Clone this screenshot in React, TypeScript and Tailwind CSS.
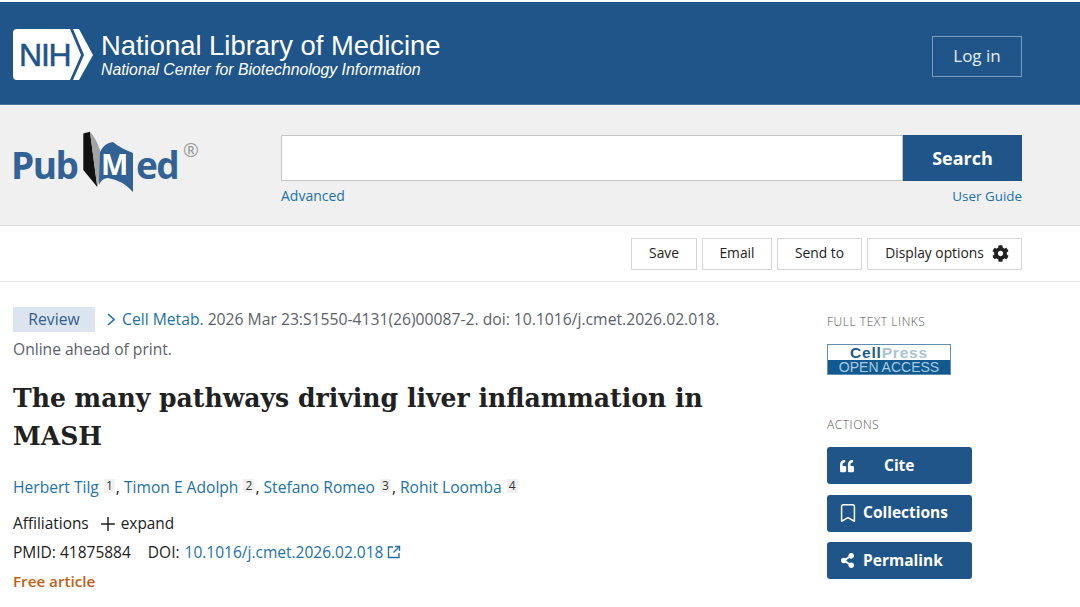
import { Bookmark, Plus } from "lucide-react";
import { FaCog, FaQuoteLeft, FaShareAlt } from "react-icons/fa";

const sans = "font-['Open_Sans','Noto_Sans',sans-serif]";

function NihLogo() {
  return (
    <div className="relative mt-[3px] h-[51px] w-[80px] shrink-0">
      <svg width="80" height="51" viewBox="0 0 80 51" className="absolute inset-0">
        <path d="M4 0H57L68 26L57 51H4Q0 51 0 47V4Q0 0 4 0Z" fill="#fff" />
        <path d="M60 0H66L80 26L66 51H60L71 26Z" fill="#fff" />
      </svg>
      <span className="absolute left-[6px] top-[7px] font-['Liberation_Sans',sans-serif] text-[32px] leading-[38px] tracking-[-1.2px] text-[#20558a] [-webkit-text-stroke:0.5px_#20558a]">
        NIH
      </span>
    </div>
  );
}

function PubMedLogo() {
  return (
    <div className="relative h-[66px] w-[190px] font-['Open_Sans',sans-serif] font-bold text-[#326295]">
      <span className="absolute -left-[2px] top-[12px] text-[37px] leading-[46px] tracking-[-1.5px]">Pub</span>
      <svg width="54" height="66" viewBox="82 130 54 66" className="absolute left-[69px] top-0">
        <path d="M83.3 133.5L90 131.7L95 170L97.3 187L83.3 170Z" fill="#111" />
        <path d="M90 131.7Q96 138 100 150V178L97.3 187L95 170Z" fill="#a3a3a3" />
        <path d="M100 152Q104 143 113 142Q120 148 133 153V192Q122 180 108 178Q102 178 99 185Z" fill="#326295" />
      </svg>
      <span className="absolute left-[88px] top-[14px] text-[29px] leading-[40px] text-white">M</span>
      <span className="absolute left-[123px] top-[12px] text-[37px] leading-[46px] tracking-[-1.5px]">ed</span>
      <span className="absolute left-[170px] top-[8px] font-normal text-[19px] leading-[24px] text-[#999]">®</span>
    </div>
  );
}

function CellPressBadge() {
  return (
    <div className="flex h-[31px] w-[124px] flex-col border border-[#5f8fb0] bg-white font-['Liberation_Sans',sans-serif]">
      <div className="h-[15px] text-center text-[15.5px] font-bold leading-[15px] tracking-[0.8px]">
        <span className="text-[#1d5a8c]">Cell</span>
        <span className="text-[#a9c2d6]">Press</span>
      </div>
      <div className="flex-1 bg-[#11598f] text-center text-[14px] leading-[14px] text-[#a8cbe3]">OPEN ACCESS</div>
    </div>
  );
}

function ActionButton({ icon, label, gap }: { icon: React.ReactNode; label: string; gap: string }) {
  return (
    <button type="button" className={`flex h-[37px] w-[145px] items-center rounded-[3px] bg-[#20558a] pl-[13px] text-[15.5px] font-bold text-white ${gap}`}>
      {icon}
      {label}
    </button>
  );
}

function BarButton({ label, width, children }: { label: string; width: string; children?: React.ReactNode }) {
  return (
    <button type="button" className={`flex h-[32px] items-center justify-center gap-[8px] border border-[#d6d6d6] bg-white text-[13.8px] text-[#212121] ${width}`}>
      {label}
      {children}
    </button>
  );
}

function Sup({ n }: { n: number }) {
  return (
    <sup className="relative -top-[3px] ml-[5px] mr-[1px] inline-block w-[11px] bg-[#f1f1f1] text-center align-baseline text-[12px] leading-[14px] text-[#333]">
      {n}
    </sup>
  );
}

export default function App() {
  return (
    <div className={`min-h-[607px] w-[1080px] overflow-hidden bg-white ${sans}`}>
      <header className="mt-[2px] flex h-[103px] items-center justify-between border-b border-[#4a76a3] bg-[#20558a] pl-[13px] pr-[58px]">
        <div className="flex items-center gap-[8px]">
          <NihLogo />
          <div className="mt-[4px] font-['Liberation_Sans',sans-serif] text-white">
            <div className="text-[27.4px] leading-[30px]">National Library of Medicine</div>
            <div className="text-[15.8px] italic leading-[18px]">National Center for Biotechnology Information</div>
          </div>
        </div>
        <button type="button" className="mt-[6px] h-[41px] w-[90px] border border-[#7b9cbd] text-[17px] text-[#e6edf4]">
          Log in
        </button>
      </header>

      <section className="flex h-[121px] border-b border-[#dedede] bg-[#f0f0f0] pl-[13px] pr-[58px] pt-[25px]">
        <div className="w-[268px] shrink-0">
          <PubMedLogo />
        </div>
        <div className="flex-1 pt-[5px]">
          <div className="flex h-[46px]">
            <div className="flex-1 border border-[#c4c4c4] bg-white" />
            <button type="button" className="w-[119px] bg-[#20558a] text-[18px] font-bold text-white">
              Search
            </button>
          </div>
          <div className="mt-[5px] flex justify-between leading-[20px] text-[#2072a8]">
            <span className="text-[14px]">Advanced</span>
            <span className="text-[13.4px]">User Guide</span>
          </div>
        </div>
      </section>

      <nav className="flex h-[56px] items-center justify-end gap-[5px] border-b border-[#ececec] pr-[58px]">
        <BarButton label="Save" width="w-[66px]" />
        <BarButton label="Email" width="w-[70px]" />
        <BarButton label="Send to" width="w-[85px]" />
        <BarButton label="Display options" width="w-[155px] pl-[5px]">
          <FaCog className="text-[17px] text-[#212121]" />
        </BarButton>
      </nav>

      <main className="flex pl-[13px] pt-[25px]">
        <article className="w-[740px] shrink-0">
          <div className="flex h-[25px] items-center whitespace-nowrap text-[15.7px] text-[#5b616b]">
            <span className="flex h-[25px] w-[82px] items-center justify-center bg-[#dce4ef] text-[#2f5f8f]">Review</span>
            <svg width="8" height="13" viewBox="0 0 8 13" fill="none" stroke="#2072a8" strokeWidth="1.6" className="ml-[12px]">
              <path d="M1 1L7 6.5L1 12" />
            </svg>
            <span className="ml-[7px] text-[#2072a8]">Cell Metab.</span>
            <span className="ml-[4px]">2026 Mar 23:S1550-4131(26)00087-2. doi: 10.1016/j.cmet.2026.02.018.</span>
          </div>
          <div className="mt-[5px] text-[15.6px] leading-[25px] text-[#5b616b]">Online ahead of print.</div>
          <h1 className="mt-[17px] w-[720px] font-['DejaVu_Serif',serif] text-[25.1px] font-bold leading-[38px] text-[#212121]">
            The many pathways driving liver inflammation in MASH
          </h1>
          <div className="mt-[18px] text-[15.6px] leading-[28px] text-[#212121]">
            <span className="text-[#2072a8]">Herbert Tilg</span>
            <Sup n={1} />, <span className="text-[#2072a8]">Timon E Adolph</span>
            <Sup n={2} />, <span className="text-[#2072a8]">Stefano Romeo</span>
            <Sup n={3} />, <span className="text-[#2072a8]">Rohit Loomba</span>
            <Sup n={4} />
          </div>
          <div className="mt-[9px] flex items-center text-[15.4px] leading-[28px] text-[#212121]">
            Affiliations
            <Plus className="ml-[8px] mr-[2px] h-[22px] w-[22px]" strokeWidth={1.6} />
            <span>expand</span>
          </div>
          <div className="flex items-center text-[15.5px] leading-[28px] text-[#212121]">
            PMID: 41875884
            <span className="ml-[17px]">DOI:</span>
            <span className="ml-[5px] text-[#2072a8]">10.1016/j.cmet.2026.02.018</span>
            <svg width="14" height="14" viewBox="0 0 14 14" fill="none" stroke="#2072a8" strokeWidth="1.4" className="ml-[4px]">
              <path d="M6 2H1.5V12.5H12V8" />
              <path d="M8 1.5H12.5V6" />
              <path d="M12.5 1.5L6.5 7.5" />
            </svg>
          </div>
          <div className="text-[15.2px] font-semibold leading-[30px] text-[#c05f15]">Free article</div>
        </article>
        <aside className="ml-[74px] w-[145px] pt-[7px]">
          <div className="text-[12px] font-light leading-[16px] tracking-[0.55px] text-[#555]">FULL TEXT LINKS</div>
          <div className="mt-[14px]">
            <CellPressBadge />
          </div>
          <div className="mt-[42px] text-[12px] font-light leading-[16px] tracking-[0.55px] text-[#555]">ACTIONS</div>
          <div className="mt-[14px] flex flex-col gap-[10.5px]">
            <ActionButton icon={<FaQuoteLeft className="text-[14px]" />} label="Cite" gap="gap-[30px]" />
            <ActionButton icon={<Bookmark className="-ml-[3px] -mr-[3px] h-[22px] w-[22px]" strokeWidth={1.6} />} label="Collections" gap="gap-[7px]" />
            <ActionButton icon={<FaShareAlt className="text-[15px]" />} label="Permalink" gap="gap-[8px]" />
          </div>
        </aside>
      </main>
    </div>
  );
}
